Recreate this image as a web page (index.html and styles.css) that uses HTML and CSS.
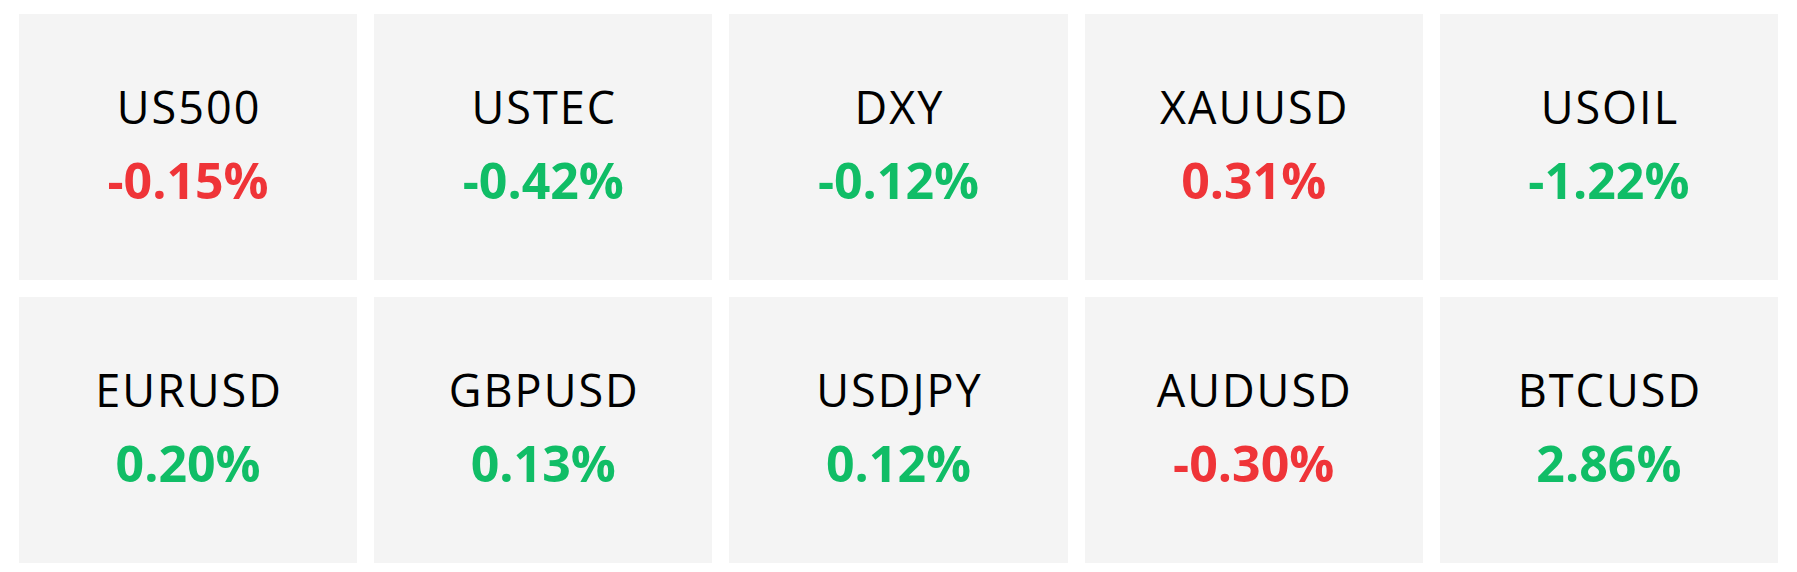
FILE: index.html
```html
<!DOCTYPE html>
<html>
<head>
<meta charset="utf-8">
<link rel="stylesheet" href="styles.css">
</head>
<body>
<div class="grid">
  <div class="card"><div class="sym">US500</div><div class="chg down">-0.15%</div></div>
  <div class="card"><div class="sym">USTEC</div><div class="chg up">-0.42%</div></div>
  <div class="card"><div class="sym">DXY</div><div class="chg up">-0.12%</div></div>
  <div class="card"><div class="sym">XAUUSD</div><div class="chg down">0.31%</div></div>
  <div class="card"><div class="sym">USOIL</div><div class="chg up">-1.22%</div></div>
  <div class="card"><div class="sym">EURUSD</div><div class="chg up">0.20%</div></div>
  <div class="card"><div class="sym">GBPUSD</div><div class="chg up">0.13%</div></div>
  <div class="card"><div class="sym">USDJPY</div><div class="chg up">0.12%</div></div>
  <div class="card"><div class="sym">AUDUSD</div><div class="chg down">-0.30%</div></div>
  <div class="card"><div class="sym">BTCUSD</div><div class="chg up">2.86%</div></div>
</div>
</body>
</html>
```
FILE: styles.css
```css
html, body {
  margin: 0;
  padding: 0;
  background: #ffffff;
}
body {
  font-family: "Open Sans", "Liberation Sans", sans-serif;
  overflow: hidden;
}
.grid {
  display: grid;
  grid-template-columns: repeat(5, 1fr);
  gap: 17px;
  padding: 14px 19px 0 19px;
}
.card {
  background: #f4f4f4;
  height: 266px;
  display: flex;
  flex-direction: column;
  align-items: center;
  justify-content: center;
  padding-bottom: 6px;
  box-sizing: border-box;
}
.sym {
  font-size: 45px;
  font-weight: 400;
  color: #000;
  line-height: 52px;
  letter-spacing: 2px;
  margin-right: -2px;
}
.chg {
  font-size: 50px;
  font-weight: 700;
  line-height: 56px;
  margin-top: 19px;
}
.down { color: #ef3438; }
.up { color: #10bd66; }
```
